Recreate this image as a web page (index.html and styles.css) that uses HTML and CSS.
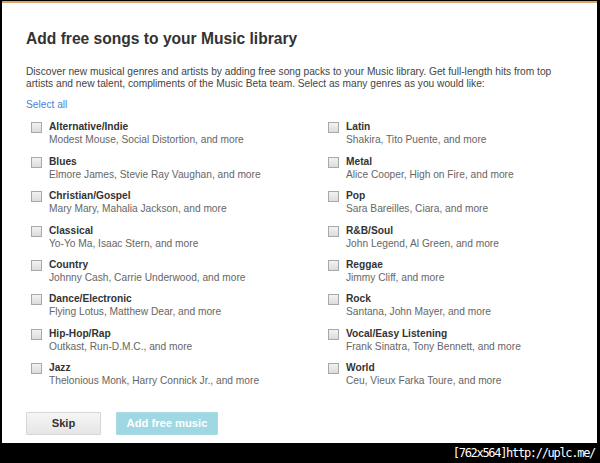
FILE: index.html
```html
<!DOCTYPE html>
<html>
<head>
<meta charset="utf-8">
<link rel="stylesheet" href="styles.css">
</head>
<body>
<div class="frame">
  <div class="dialog">
    <h1 class="title">Add free songs to your Music library</h1>
    <p class="desc">Discover new musical genres and artists by adding free song packs to your Music library. Get full-length hits from top artists and new talent, compliments of the Music Beta team. Select as many genres as you would like:</p>
    <a class="select-all">Select all</a>
    <div class="genres">
      <div class="genre"><span class="box"></span><div><div class="name">Alternative/Indie</div><div class="artists">Modest Mouse, Social Distortion, and more</div></div></div>
      <div class="genre"><span class="box"></span><div><div class="name">Latin</div><div class="artists">Shakira, Tito Puente, and more</div></div></div>
      <div class="genre"><span class="box"></span><div><div class="name">Blues</div><div class="artists">Elmore James, Stevie Ray Vaughan, and more</div></div></div>
      <div class="genre"><span class="box"></span><div><div class="name">Metal</div><div class="artists">Alice Cooper, High on Fire, and more</div></div></div>
      <div class="genre"><span class="box"></span><div><div class="name">Christian/Gospel</div><div class="artists">Mary Mary, Mahalia Jackson, and more</div></div></div>
      <div class="genre"><span class="box"></span><div><div class="name">Pop</div><div class="artists">Sara Bareilles, Ciara, and more</div></div></div>
      <div class="genre"><span class="box"></span><div><div class="name">Classical</div><div class="artists">Yo-Yo Ma, Isaac Stern, and more</div></div></div>
      <div class="genre"><span class="box"></span><div><div class="name">R&amp;B/Soul</div><div class="artists">John Legend, Al Green, and more</div></div></div>
      <div class="genre"><span class="box"></span><div><div class="name">Country</div><div class="artists">Johnny Cash, Carrie Underwood, and more</div></div></div>
      <div class="genre"><span class="box"></span><div><div class="name">Reggae</div><div class="artists">Jimmy Cliff, and more</div></div></div>
      <div class="genre"><span class="box"></span><div><div class="name">Dance/Electronic</div><div class="artists">Flying Lotus, Matthew Dear, and more</div></div></div>
      <div class="genre"><span class="box"></span><div><div class="name">Rock</div><div class="artists">Santana, John Mayer, and more</div></div></div>
      <div class="genre"><span class="box"></span><div><div class="name">Hip-Hop/Rap</div><div class="artists">Outkast, Run-D.M.C., and more</div></div></div>
      <div class="genre"><span class="box"></span><div><div class="name">Vocal/Easy Listening</div><div class="artists">Frank Sinatra, Tony Bennett, and more</div></div></div>
      <div class="genre"><span class="box"></span><div><div class="name">Jazz</div><div class="artists">Thelonious Monk, Harry Connick Jr., and more</div></div></div>
      <div class="genre"><span class="box"></span><div><div class="name">World</div><div class="artists">Ceu, Vieux Farka Toure, and more</div></div></div>
    </div>
    <div class="buttons">
      <button class="btn skip">Skip</button>
      <button class="btn add">Add free music</button>
    </div>
  </div>
</div>
<div class="watermark">[762x564]http://uplc.me/</div>
</body>
</html>
```
FILE: styles.css
```css
html, body {
  margin: 0;
  padding: 0;
  background: #000;
  width: 600px;
  height: 463px;
  overflow: hidden;
}
.frame {
  margin: 1px 3px 0 2px;
  border-top: 2px solid #dca36c;
  background: #fff;
  height: 442px;
  box-sizing: border-box;
}
.dialog {
  padding: 0 0 0 24px;
  font-family: "Liberation Sans", Arial, sans-serif;
  color: #444;
}
.title {
  margin: 0;
  padding-top: 26px;
  font-size: 15.6px;
  line-height: 19px;
  font-weight: bold;
  color: #333;
}
.desc {
  margin: 18px 0 0;
  font-size: 10.2px;
  line-height: 12.2px;
  color: #444;
  width: 540px;
}
.select-all {
  display: block;
  margin-top: 8px;
  font-size: 10.2px;
  line-height: 13px;
  color: #4c7fd6;
}
.genres {
  display: grid;
  grid-template-columns: 297px 1fr;
  grid-auto-rows: 34.4px;
  margin: 9px 0 0 5px;
}
.genre {
  display: flex;
  gap: 7px;
  align-items: flex-start;
}
.box {
  flex: none;
  width: 9px;
  height: 9px;
  margin-top: 2px;
  border: 1px solid #a8a8a8;
  background: linear-gradient(#f2f2f2, #dcdcdc);
}
.name {
  font-size: 10.2px;
  font-weight: bold;
  line-height: 13px;
  color: #333;
}
.artists {
  font-size: 10.2px;
  line-height: 13px;
  color: #666;
}
.buttons {
  display: flex;
  gap: 15px;
  margin-top: 16px;
}
.btn {
  height: 23px;
  font-family: "Liberation Sans", Arial, sans-serif;
  font-size: 11.2px;
  font-weight: bold;
  padding: 0;
  border-radius: 1px;
}
.skip {
  width: 75px;
  color: #333;
  border: 1px solid #d6d6d6;
  background: linear-gradient(#f5f5f5, #e6e6e6);
}
.add {
  width: 102px;
  color: #fff;
  border: 1px solid #a6dbe3;
  background: #9fd8e2;
}
.watermark {
  position: absolute;
  right: 5px;
  top: 444px;
  font-family: "DejaVu Sans Mono", monospace;
  font-size: 12px;
  letter-spacing: -1.3px;
  line-height: 18px;
  color: #fff;
}
```
